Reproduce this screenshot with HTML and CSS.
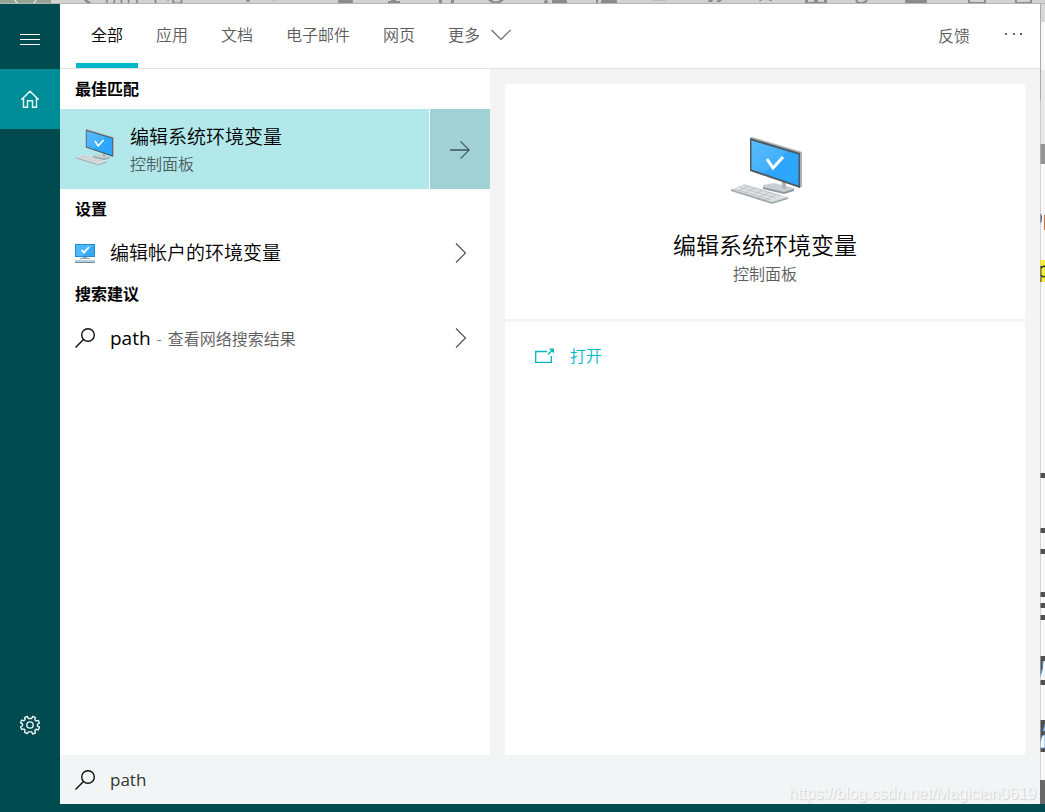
FILE: index.html
```html
<!DOCTYPE html>
<html lang="zh-CN">
<head>
<meta charset="utf-8">
<title>搜索</title>
<link rel="stylesheet" href="styles.css">
</head>
<body>
<div class="desktop">
  <div class="strip" aria-hidden="true">
    <svg class="strip-art" width="1045" height="4" viewBox="0 0 1045 4">
      <rect width="51" height="4" fill="#94a591"/>
      <path d="M15 0a11 8 0 0 0 21 0" fill="none" stroke="#dfe5dd" stroke-width="1.5"/>
      <path d="M85 0l6 4" stroke="#888" stroke-width="2.5"/>
      <text x="103" y="2" font-size="21" font-weight="400" fill="#858585">创作中心</text>
      <g fill="#8b8b8b">
        <circle cx="248" cy="0" r="2"/><circle cx="274" cy="0" r="1.5" fill="#bbb"/>
        <rect x="338" width="15" height="3" rx="1"/><rect x="388" y="1" width="12" height="3"/><rect x="391" width="5" height="2"/>
        <rect x="439" width="3" height="4"/><rect x="451" width="3" height="4"/>
        <path d="M488 0q8 8 16 0h-4q-4 3-8 0z"/>
        <circle cx="546" cy="2" r="2"/><rect x="552" y="0" width="15" height="4" rx="1"/>
        <rect x="596" width="2" height="4"/><rect x="601" y="0" width="16" height="4" rx="1"/>
        <rect x="653" width="13" height="1" fill="#bbb"/>
        <path d="M709 0h4l-1 2h-4zM718 0h4l-2 2h-4z"/>
        <path d="M759 1l3-1M769 0l3 1" stroke="#8b8b8b"/>
        <path d="M805 0h22v1q0 3-3 3h-16q-3 0-3-3zM808 0v2h6V0zM818 0v2h6V0z" fill-rule="evenodd"/>
        <path d="M856 0q2 4 6 3t5-3" fill="none" stroke="#8b8b8b" stroke-width="2"/>
        <rect x="905" width="22" height="3" rx="1"/>
        <path d="M969 0v3h16V0M1016 0v3h15V0" fill="none" stroke="#8b8b8b" stroke-width="2"/>
      </g>
    </svg>
  </div>

  <div class="middle">
    <nav class="rail" aria-label="导航">
      <button class="rail-button menu" aria-label="菜单">
        <svg width="20" height="12" viewBox="0 0 20 12" shape-rendering="crispEdges"><path d="M0 .5h20M0 5.5h20M0 10.5h20" stroke="#fff"/></svg>
      </button>
      <button class="rail-button home" aria-label="主页">
        <svg width="20" height="20" viewBox="0 0 20 20" fill="none" stroke="#eaffff" stroke-width="1.4"><path d="M1.3 10.7L10 2.200l8.700 8.500M3.500 8.800v9.500h4v-6.500h5v6.500h4V8.800"/></svg>
      </button>
      <button class="rail-button settings" aria-label="设置">
        <svg width="20" height="20" viewBox="0 0 22 22" fill="none" stroke="#eef7f7" stroke-width="1.500" stroke-linejoin="round"><path d="M8 1.500l1.200 2.300h3.600L14 1.500l3 1.300-.7 2.500 1.400 1.400 2.500-.7 1.200 3-2.200 1.200v2l2.200 1.200-1.200 3-2.500-.7-1.400 1.400.7 2.500-3 1.300-1.200-2.300H9.200L8 20.500l-3-1.300.7-2.500-1.400-1.400-2.500.7-1.200-3 2.200-1.200v-2L.6 8.600l1.200-3 2.500.7 1.400-1.400L5 2.800z"/><circle cx="11" cy="11" r="3.500"/></svg>
      </button>
    </nav>

    <div class="window">
      <header class="header">
        <div class="tabs" role="tablist">
          <button class="tab active" role="tab" aria-selected="true">全部</button>
          <button class="tab" role="tab">应用</button>
          <button class="tab" role="tab">文档</button>
          <button class="tab" role="tab">电子邮件</button>
          <button class="tab" role="tab">网页</button>
          <button class="tab more" role="tab">更多
            <svg width="20" height="12" viewBox="0 0 20 12" fill="none" stroke="#666" stroke-width="1.200"><path d="M.5 1l9.500 9.500L19.500 1"/></svg>
          </button>
        </div>
        <div class="actions">
          <button class="action">反馈</button>
          <button class="action" aria-label="更多选项">
            <svg width="20" height="6" viewBox="0 0 20 6" fill="#666"><path d="M1 0h2v2H1zM9 0h2v2H9zM16 0h2v2h-2z"/></svg>
          </button>
        </div>
      </header>

      <div class="content">
        <main class="results">
          <h2 class="group-title">最佳匹配</h2>
          <div class="best">
            <button class="best-main">
              <svg class="best-icon" viewBox="0 0 74 68"><use href="#computer"/></svg>
              <span class="best-text">
                <span class="result-name">编辑系统环境变量</span>
                <span class="subtitle">控制面板</span>
              </span>
            </button>
            <button class="best-arrow" aria-label="展开">
              <svg width="20" height="20" viewBox="0 0 20 20" fill="none" stroke="#3f5558"><path d="M0 10h19" stroke-width="1.500"/><path d="M10.500 1.300l8.700 8.700-8.700 8.700" stroke-width="1.200"/></svg>
            </button>
          </div>
          <h2 class="group-title">设置</h2>
          <button class="row">
            <svg class="row-icon" width="20" height="20" viewBox="0 0 20 20"><path d="M0 1h20v13H0z" fill="#238bd1"/><path d="M1 2h18v11H1z" fill="#36a9f6"/><path d="M1 2h18L8 13H1z" fill="#4db8fa"/><path d="M6.500 7l2.500 2.500L14 4" fill="none" stroke="#fff" stroke-width="1.700"/><path d="M8 14h4v1h3v1H5v-1h3z" fill="#94a6b2"/><path d="M0 17h20v2H0z" fill="#b7ccda"/><path d="M0 19h20v1H0z" fill="#718b9c"/></svg>
            <span class="result-name">编辑帐户的环境变量</span>
            <svg class="chevron" width="12" height="20" viewBox="0 0 12 20" fill="none" stroke="#555" stroke-width="1.200"><path d="M1 .5l9.500 9.500L1 19.500"/></svg>
          </button>
          <h2 class="group-title">搜索建议</h2>
          <button class="row">
            <svg class="row-icon" width="20" height="20" viewBox="0 0 20 20" fill="none" stroke="#111" stroke-width="1.400"><circle cx="13" cy="7" r="6.300"/><path d="M8.500 11.500L.5 19.500"/></svg>
            <span class="suggestion"><span class="query">path</span><span class="subtitle">-</span><span class="subtitle">查看网络搜索结果</span></span>
            <svg class="chevron" width="12" height="20" viewBox="0 0 12 20" fill="none" stroke="#555" stroke-width="1.200"><path d="M1 .5l9.500 9.500L1 19.500"/></svg>
          </button>
        </main>

        <aside class="preview">
          <section class="hero">
            <svg class="hero-icon" viewBox="0 0 74 68">
              <defs>
                <linearGradient id="screen" x1="0" y1="0" x2="1" y2="1"><stop offset="0" stop-color="#5abcfb"/><stop offset=".5" stop-color="#42b0fc"/><stop offset=".5" stop-color="#30a6fb"/><stop offset="1" stop-color="#2aa6ff"/></linearGradient>
                <g id="computer">
                  <path d="M33 48l11-2 20 5v2l-10 3-21-5z" fill="#c9d0d3"/>
                  <path d="M33 50l21 5 10-3v2l-10 3-21-5z" fill="#8e999f"/>
                  <path d="M52 42l4 1v9l-4-1z" fill="#aab6bc"/>
                  <path d="M20 1l2-1 50 15v35l-3 1z" fill="#a8b1b4"/>
                  <path d="M20 1l50 15v35L20 34z" fill="#4c5960"/>
                  <path d="M21.500 3.500l47 14v31l-47-16z" fill="url(#screen)"/>
                  <path d="M37 22l6 9 10-11" fill="none" stroke="#fff" stroke-width="3"/>
                  <path d="M1 52l14-5 43 13-16 5z" fill="#dfe2e3"/>
                  <path d="M1 52l41 13 16-5v2l-16 5L1 54z" fill="#a3aaad"/>
                  <path d="M5 52l36 11M9 50l37 11M13 48l38 11M6 55l13-6M13 57l12-6M20 59l13-6M27 61l13-6M34 63l13-6" stroke="#b8bdc0" stroke-width=".8"/>
                </g>
              </defs>
              <use href="#computer"/>
            </svg>
            <h1 class="hero-title">编辑系统环境变量</h1>
            <p class="subtitle hero-subtitle">控制面板</p>
          </section>
          <section class="commands">
            <button class="open">
              <svg width="20" height="16" viewBox="0 0 20 16" fill="none" stroke="#00b7c3" stroke-width="1.300"><path d="M12 3.500H.7v10.800h15.600V8"/><path d="M13 6.500l5-5" stroke-width="1.500"/><path d="M14 .5h5v5z" fill="#00b7c3" stroke="none"/></svg>
              <span>打开</span>
            </button>
          </section>
        </aside>
      </div>

      <label class="search">
        <svg width="20" height="20" viewBox="0 0 20 20" fill="none" stroke="#111" stroke-width="1.400"><circle cx="13" cy="7" r="6.300"/><path d="M8.500 11.500L.5 19.500"/></svg>
        <input class="search-input" type="text" value="path" aria-label="搜索">
      </label>
    </div>

    <div class="edge" aria-hidden="true">
      <svg width="5" height="800" viewBox="0 0 5 800">
        <rect width="5" height="800" fill="#f8f8f8"/>
        <rect width="5" height="18" fill="#d8d8d8"/>
        <rect y="66" width="5" height="74" fill="#e8e8e8"/>
        <rect y="140" width="5" height="20" fill="#949494"/>
        <path d="M0 210q2 4 0 9" fill="none" stroke="#4a5c8c" stroke-width="2"/><rect x="4" y="211" width="1" height="15" fill="#b97748"/>
        <rect y="256" width="5" height="22" fill="#f2ef35"/><path d="M.7 262v16M1 264q3-3 4-1M1 271q2 3 4 1" fill="none" stroke="#222" stroke-width="1.300"/>
        <path d="M0 469h5v5H0zM0 524h5v5H0zM0 545h5v5H0zM0 588h5v5H0zM0 599h5v5H0zM0 611h5v5H0zM0 652h5v5H0zM0 676h5v5H0zM0 716h5v32H0z" fill="#505050"/>
        <path d="M0 657h3q0 8-3 15z" fill="#555"/><path d="M3 657q0 9-3 16" fill="none" stroke="#3689d0"/>
        <path d="M5 720l-2 7h2zM0 744q0-10 3-13h2v13z" fill="#f4fbff" stroke="#4a91d4" stroke-width=".8"/>
        <rect y="776" width="5" height="24" fill="#686868"/>
        <path d="M.5 0v96" stroke="#a5a7b2"/><path d="M.5 96v680" stroke="#bbb" stroke-opacity=".6"/>
      </svg>
    </div>
  </div>
  <div class="taskbar"></div>
  <span class="watermark">https://blog.csdn.net/Magician0619</span>
</div>
</body>
</html>
```

FILE: styles.css
```css
* { box-sizing: border-box; }

body {
  margin: 0;
  font-family: "Open Sans", "Noto Sans CJK SC", sans-serif;
  font-size: 16px;
  font-weight: 350;
  line-height: 24px;
  color: #000;
}

button {
  margin: 0;
  padding: 0;
  border: 0;
  background: none;
  font: inherit;
  color: inherit;
  text-align: left;
}

svg { display: block; flex: none; }

.desktop {
  position: relative;
  display: flex;
  flex-direction: column;
  height: 100vh;
  overflow: hidden;
}

.strip {
  flex: none;
  height: 4px;
  overflow: hidden;
  background: #d2d2d2;
  border-bottom: 1px solid #b5b5b5;
}

.middle { display: flex; flex: 1; min-height: 0; }

.rail {
  display: flex;
  flex-direction: column;
  flex: none;
  width: 60px;
  background: #004b50;
}

.rail-button {
  display: flex;
  align-items: center;
  justify-content: center;
  height: 60px;
}

.menu { height: 65px; padding-top: 6px; }
.home { background: #008c96; }
.settings { margin-top: auto; margin-bottom: 49px; }

.window {
  display: flex;
  flex-direction: column;
  flex: 1;
  min-width: 0;
  background: #fff;
}

.header {
  display: flex;
  justify-content: space-between;
  flex: none;
  height: 65px;
  padding: 0 16px;
  border-bottom: 1px solid #e2e2e2;
}

.tabs { display: flex; gap: 3px; }

.tab {
  padding: 0 15px;
  border-top: 3px solid transparent;
  border-bottom: 5px solid transparent;
  color: #5c5c5c;
  white-space: nowrap;
}

.active { color: #000; border-bottom-color: #00b7c7; }
.more { display: flex; align-items: center; gap: 11px; }
.actions { display: flex; gap: 34px; }
.action { color: #5c5c5c; }

.content { display: flex; flex: 1; min-height: 0; }

.results { flex: none; width: 430px; }

.group-title {
  margin: 0;
  padding-left: 15px;
  font-size: 16px;
  font-weight: 700;
  line-height: 40px;
}

.best { display: flex; gap: 1px; height: 80px; }

.best-main {
  display: flex;
  align-items: center;
  gap: 15px;
  flex: 1;
  padding-left: 15px;
  background: #b3e8eb;
}

.best-icon { width: 40px; height: 37px; margin-bottom: 4px; }
.best-text { display: flex; flex-direction: column; gap: 2px; padding-top: 2px; }

.best-arrow {
  display: flex;
  align-items: center;
  justify-content: center;
  width: 60px;
  padding-top: 2px;
  background: #a1d1d4;
}

.result-name { font-size: 19px; line-height: 26px; }
.query { font-size: 19px; font-weight: 400; line-height: 26px; }
.subtitle { font-size: 16px; color: #5c5c5c; }
.best .subtitle { color: #4b6062; }

.row {
  display: flex;
  align-items: center;
  gap: 15px;
  width: 100%;
  height: 45px;
  padding: 2px 23px 0 15px;
}

.chevron { margin-left: auto; }
.suggestion { display: flex; align-items: baseline; gap: 6px; }

.preview {
  display: flex;
  flex-direction: column;
  flex: 1;
  min-width: 0;
  padding: 15px 15px 0;
  background: #f4f4f4;
}

.hero {
  display: flex;
  flex-direction: column;
  align-items: center;
  height: 235px;
  padding-top: 53px;
  background: #fff;
}

.hero-icon { width: 74px; height: 68px; margin-left: 3px; }

.hero-title {
  margin: 24px 0 0;
  font-size: 23px;
  font-weight: 350;
  line-height: 32px;
}

.hero-subtitle { margin: 1px 0 0; }

.commands {
  flex: 1;
  margin-top: 3px;
  padding: 22px 30px;
  background: #fff;
}

.open {
  display: flex;
  align-items: center;
  gap: 15px;
  color: #00b7c3;
}

.search {
  display: flex;
  align-items: center;
  gap: 15px;
  flex: none;
  height: 49px;
  padding: 0 15px;
  background: #f2f5f6;
}

.search-input {
  flex: 1;
  padding: 0;
  border: 0;
  outline: 0;
  background: none;
  font: inherit;
  font-size: 17px;
  font-weight: 400;
  color: #333;
}

.edge { flex: none; width: 5px; overflow: hidden; }
.taskbar { flex: none; height: 8px; background: #004b50; }

.watermark {
  position: absolute;
  right: 9px;
  bottom: 6px;
  font-family: "Liberation Sans", sans-serif;
  font-size: 16px;
  font-weight: 400;
  color: #f6f8f8;
  text-shadow: 1px 1px 1px #cdd1d2;
}
```
